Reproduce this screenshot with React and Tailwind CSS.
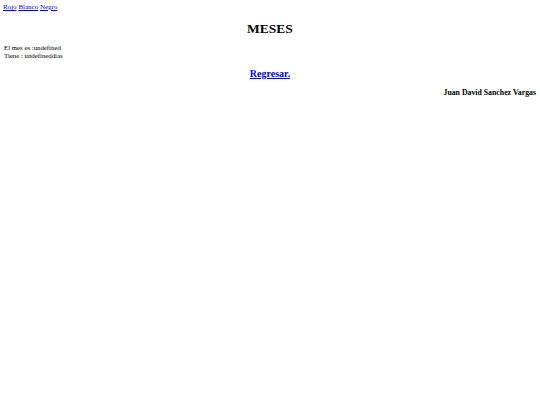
export default function App() {
  return (
    <div className="min-h-screen bg-white px-[3px] pt-[3px] text-[7px] leading-[8px] text-black" style={{ fontFamily: '"Liberation Serif", serif' }}>
      <div>
        <a href="#" className="text-[#0000ee] underline">Rojo</a>{' '}
        <a href="#" className="text-[#0000ee] underline">Blanco</a>{' '}
        <a href="#" className="text-[#0000ee] underline">Negro</a>
      </div>
      <h1 className="mt-[10px] text-center text-[13.5px] font-bold leading-[15px]">MESES</h1>
      <p className="mt-[7.5px] pl-[1px] text-[6.8px]">
        El mes es :undefined
        <br />
        Tiene : undefineddias
      </p>
      <h2 className="mt-[8.5px] text-center text-[10px] font-bold leading-[11px]">
        <a href="#" className="text-[#0000ee] underline">Regresar.</a>
      </h2>
      <h3 className="mt-[9px] pr-[1px] text-right text-[7.8px] font-bold leading-[9px]">Juan David Sanchez Vargas</h3>
    </div>
  );
}
